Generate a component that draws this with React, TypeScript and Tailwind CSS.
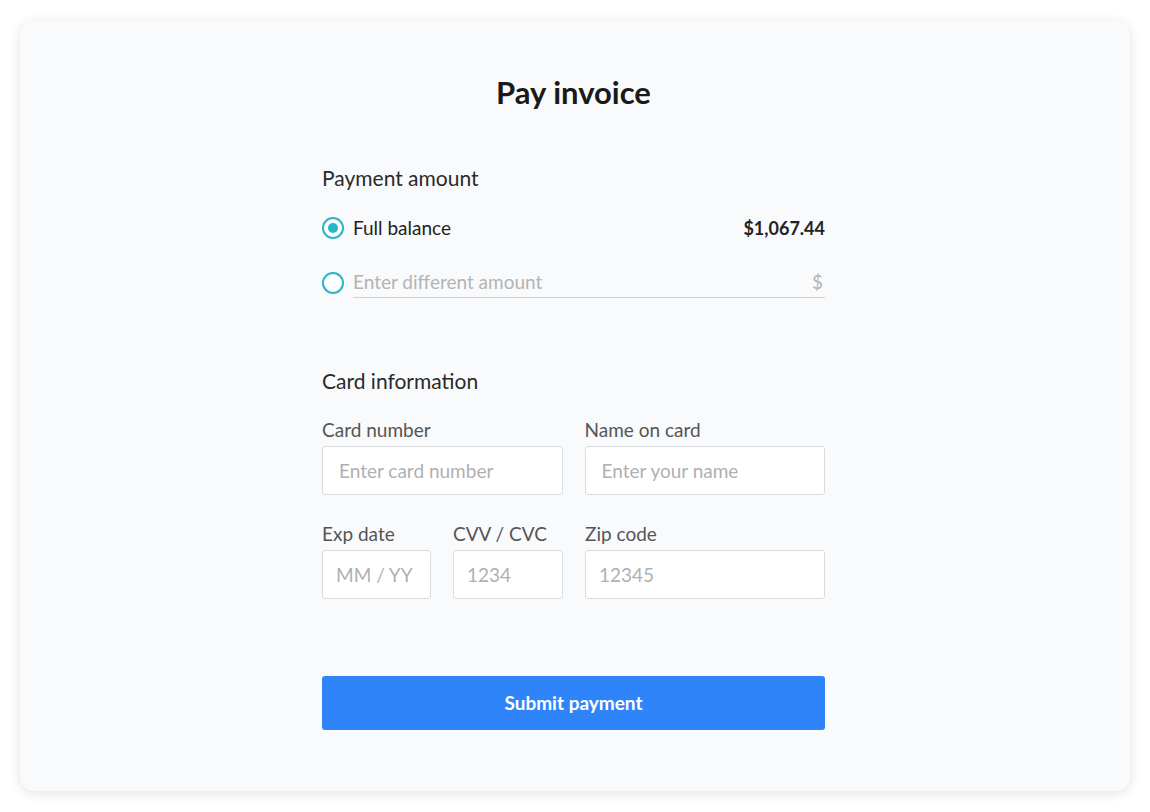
// Pay invoice form
import { useState } from "react";

type Mode = "full" | "custom";

export default function App() {
  const [mode, setMode] = useState<Mode>("full");

  return (
    <div
      className="min-h-screen bg-white px-[20px] pt-[21px] pb-[21px]"
      style={{ fontFamily: "Lato, 'Liberation Sans', sans-serif" }}
    >
      {/* card */}
      <div className="h-[770px] rounded-[14px] bg-[#f9fafb] shadow-[0_2px_12px_rgba(0,0,0,0.12)]">
        <div className="ml-[302px] w-[503px] pt-[53px]">
          <h1 className="text-center text-[31px] leading-[36px] font-bold text-[#1a1a1a]">
            Pay invoice
          </h1>

          {/* payment amount */}
          <h2 className="mt-[54px] text-[21px] leading-[28px] text-[#2a2a2a]">
            Payment amount
          </h2>
          <div className="mt-[22px] flex h-[28px] items-center">
            <Radio checked={mode === "full"} onClick={() => setMode("full")} />
            <span className="ml-[9px] text-[19px] text-[#222]">Full balance</span>
            <span className="ml-auto text-[18px] font-bold text-[#222]">$1,067.44</span>
          </div>
          <div className="mt-[26px] flex h-[30px] items-center">
            <Radio checked={mode === "custom"} onClick={() => setMode("custom")} />
            <div className="ml-[9px] flex h-[30px] flex-1 items-center border-b border-[#cfd3d6]">
              <input
                className="flex-1 bg-transparent text-[19px] text-[#333] outline-none placeholder:text-[#b4b4b4]"
                placeholder="Enter different amount"
              />
              <span className="pr-[2px] text-[19px] text-[#b4b4b4]">$</span>
            </div>
          </div>

          {/* card information */}
          <h2 className="mt-[69px] text-[21px] leading-[28px] text-[#2a2a2a]">
            Card information
          </h2>
          <div className="mt-[23px] grid grid-cols-2 gap-x-[22px]">
            <Field label="Card number" placeholder="Enter card number" />
            <Field label="Name on card" placeholder="Enter your name" />
          </div>
          <div className="mt-[27px] grid grid-cols-[109px_110px_1fr] gap-x-[22px]">
            <Field label="Exp date" placeholder="MM / YY" compact />
            <Field label="CVV / CVC" placeholder="1234" compact />
            <Field label="Zip code" placeholder="12345" compact />
          </div>

          <button className="mt-[77px] h-[54px] w-full rounded-[3px] bg-[#2f84fa] text-[19px] font-bold text-white">
            Submit payment
          </button>
        </div>
      </div>
    </div>
  );
}

function Radio({ checked, onClick }: { checked: boolean; onClick: () => void }) {
  return (
    <button
      onClick={onClick}
      className="flex h-[22px] w-[22px] shrink-0 items-center justify-center rounded-full border-2 border-[#2bb5c8] bg-white"
    >
      {checked && <span className="h-[10px] w-[10px] rounded-full bg-[#2bb5c8]" />}
    </button>
  );
}

function Field({
  label,
  placeholder,
  compact = false,
}: {
  label: string;
  placeholder: string;
  compact?: boolean;
}) {
  return (
    <div>
      <div className="text-[19px] leading-[24px] text-[#555]">{label}</div>
      <input
        className={`mt-[4px] h-[49px] w-full rounded-[3px] border border-[#d9dcdf] bg-white text-[19px] text-[#333] outline-none placeholder:text-[#b0b0b0] ${
          compact ? "px-[13px]" : "px-[16px]"
        }`}
        placeholder={placeholder}
      />
    </div>
  );
}
